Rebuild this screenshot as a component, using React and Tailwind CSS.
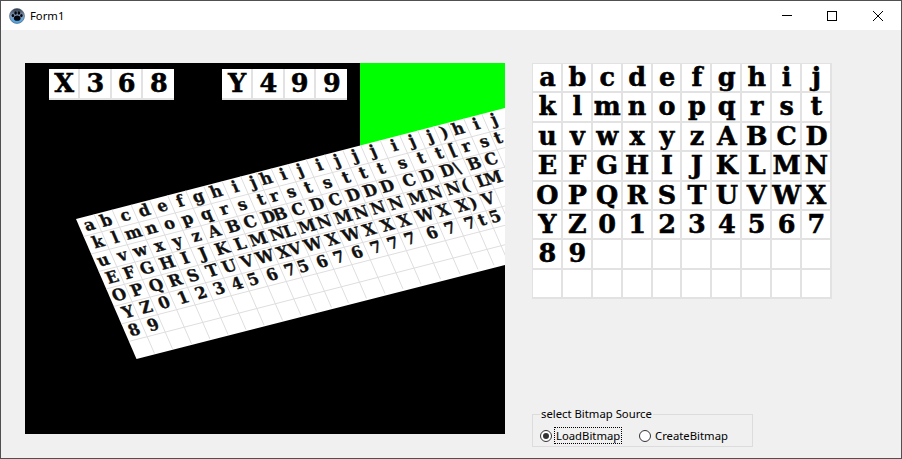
import React from "react";

const ALPHABET = "abcdefghijklmnopqrstuvwxyzABCDEFGHIJKLMNOPQRSTUVWXYZ0123456789".split("");
const CELLS = Array.from({ length: 80 }, (_, i) => ALPHABET[i] ?? "");

const ROWS = [
  "a89 b106 c125 d144 e162 f180 g198 h216 i235 j253 h266 i283 j300 i319 j337 j355 j373 i394 j412 j430 )444 h458 i476 j494",
  "k98 l115 m133 n151 o169 p187 q206 r224 s242 t261 r274 s291 t308 s327 t346 t363 t381 s402 t421 t439 [452 r466 s484 t498",
  "u103 v122 w140 x159 y177 z196 A214 B233 C250 D268 B280 C298 D317 C335 D353 D370 D387 C409 D427 D447 \\457 B474 C491",
  "E112 F129 G147 H167 I185 J203 K222 L240 M258 N277 L289 M307 N324 M343 N361 N378 N396 M417 N435 N453 (465 L482 M493",
  "O119 P137 Q156 R175 S193 T212 U229 V247 W265 X283 V295 W313 X332 W351 X369 X387 X404 W425 X443 X462 )473 V488",
  "Y128 Z146 0164 1183 2201 3219 4237 5253 6272 7290 5303 6322 7339 6357 7376 7393 7410 6432 7450 7470 t482 5495",
  "8134 9153",
].map((row) => row.split(" ").map((t) => [t[0], Number(t.slice(1))]));

const TILE_FONT = "font-['DejaVu_Serif'] font-bold [-webkit-text-stroke:0.5px_black]";

function Tile({ ch }) {
  return (
    <div className={`flex items-center justify-center pl-[1px] bg-white text-black text-[25.5px] leading-none border-r-2 border-b-2 border-[#e2e2e2] ${TILE_FONT}`}>
      {ch}
    </div>
  );
}

function Readout({ text }) {
  return (
    <div className="grid grid-cols-[repeat(4,31.25px)] h-[31px] bg-white">
      {text.split("").map((c, i) => (
        <div
          key={i}
          className={`flex items-center justify-center pl-[1px] text-black text-[25.5px] leading-none border-r-2 border-b-2 border-[#e2e2e2] last:border-r-0 ${TILE_FONT}`}
        >
          {c}
        </div>
      ))}
    </div>
  );
}

function WarpedBitmap() {
  const ox = 25;
  const oy = 63;
  const v = [7.6, 17.5];
  const firstRow = ROWS[0];
  const rowCentre = (r, x) => 224.5 + 17.5 * r - 0.26 * (x - 89 - 7.6 * r);
  const columnLines = firstRow.slice(0, -1).map((l, i) => {
    const mx = (l[1] + firstRow[i + 1][1]) / 2;
    const my = rowCentre(0, mx);
    return [mx - v[0] / 2, my - v[1] / 2, mx + v[0] * 7.5, my + v[1] * 7.5];
  });
  const rowLines = Array.from({ length: 7 }, (_, i) => {
    const x0 = 76 + 7.5 * (i + 1);
    const y0 = 219 + 17.5 * (i + 1);
    return [x0, y0, 520, y0 - 0.257 * (520 - x0)];
  });
  return (
    <svg className="absolute inset-0" width="480" height="371" viewBox={`${ox} ${oy} 480 371`}>
      <defs>
        <clipPath id="quad">
          <polygon points="76,219 505,108 505,265 136.5,359" />
        </clipPath>
      </defs>
      <rect x="360" y="63" width="145" height="90" fill="#00ff00" />
      <polygon points="76,219 505,108 505,265 136.5,359" fill="#ffffff" />
      <g clipPath="url(#quad)" stroke="#dedede" strokeWidth="1">
        {columnLines.map((l, i) => (
          <line key={i} x1={l[0]} y1={l[1]} x2={l[2]} y2={l[3]} />
        ))}
        {rowLines.map((l, i) => (
          <line key={i} x1={l[0]} y1={l[1]} x2={l[2]} y2={l[3]} />
        ))}
        <g fill="#111111" className="font-['DejaVu_Serif'] font-bold" stroke="#111111" strokeWidth="0.5" fontSize="25.5" textAnchor="middle">
          {ROWS.map((row, r) =>
            row.map(([c, x], i) => (
              <text key={`${r}-${i}`} transform={`matrix(0.6,-0.16,0.26,0.6,${x},${rowCentre(r, x)})`} x="0" y="9">
                {c}
              </text>
            ))
          )}
        </g>
      </g>
    </svg>
  );
}

function PawIcon() {
  return (
    <svg width="16" height="16" viewBox="0 0 16 16">
      <defs>
        <linearGradient id="globe" x1="0" y1="0" x2="0" y2="1">
          <stop offset="0" stopColor="#2c3440" />
          <stop offset="0.5" stopColor="#8aa4c4" />
          <stop offset="1" stopColor="#3fa4ee" />
        </linearGradient>
      </defs>
      <circle cx="8" cy="8" r="7.5" fill="url(#globe)" stroke="#4d5a6a" strokeWidth="0.6" />
      <g fill="#05050c">
        <ellipse cx="8.2" cy="10.2" rx="3.3" ry="2.6" />
        <ellipse cx="3.9" cy="7.6" rx="1.3" ry="1.7" />
        <ellipse cx="6.6" cy="5" rx="1.3" ry="1.8" />
        <ellipse cx="9.9" cy="5" rx="1.3" ry="1.8" />
        <ellipse cx="12.4" cy="7.6" rx="1.3" ry="1.7" />
      </g>
    </svg>
  );
}

function Radio({ checked }) {
  return (
    <span className="flex items-center justify-center w-[12px] h-[12px] rounded-full border border-[#333333] bg-white shrink-0">
      {checked && <span className="w-[6px] h-[6px] rounded-full bg-[#333333]" />}
    </span>
  );
}

export default function App() {
  return (
    <div className="w-[902px] h-[459px] flex flex-col bg-[#f0f0f0] border border-[#505050] font-['Noto_Sans',sans-serif] text-[11.3px] text-black overflow-hidden">
      <header className="h-[29px] shrink-0 bg-white flex items-center pl-[8px]">
        <PawIcon />
        <span className="ml-[5px] leading-none">Form1</span>
        <div className="ml-auto flex items-center">
          <svg width="12" height="12" viewBox="0 0 12 12" className="mr-[33px]">
            <line x1="1" y1="5.5" x2="11" y2="5.5" stroke="#000" />
          </svg>
          <svg width="12" height="12" viewBox="0 0 12 12" className="mr-[34px]">
            <rect x="1.5" y="1.5" width="9" height="9" fill="none" stroke="#000" />
          </svg>
          <svg width="12" height="12" viewBox="0 0 12 12" className="mr-[17px]">
            <path d="M1 1 L11 11 M11 1 L1 11" stroke="#000" />
          </svg>
        </div>
      </header>

      <main className="flex-1 flex pl-[24px] pt-[33px] pb-[11px]">
        <section className="relative w-[480px] h-[371px] bg-black overflow-hidden shrink-0">
          <WarpedBitmap />
          <div className="relative flex pt-[6px] pl-[24px] gap-[48px]">
            <Readout text="X368" />
            <Readout text="Y499" />
          </div>
        </section>

        <aside className="ml-[27px] flex flex-col">
          <div className="w-[300px] h-[236px] border-l border-t border-[#e2e2e2] grid grid-cols-[repeat(10,29.9px)] grid-rows-[repeat(8,29.4px)]">
            {CELLS.map((c, i) => (
              <Tile key={i} ch={c} />
            ))}
          </div>
          <fieldset className="mt-auto w-[221px] h-[40px] border border-[#dcdcdc] pl-[7px] pt-[6px] flex items-center">
            <legend className="px-[1px] leading-[14px]">select Bitmap Source</legend>
            <div className="flex items-center w-[99px]">
              <Radio checked />
              <span className="ml-[2px] px-[1px] h-[17px] flex items-center border border-dotted border-black leading-none">LoadBitmap</span>
            </div>
            <div className="flex items-center">
              <Radio />
              <span className="ml-[4px] leading-none">CreateBitmap</span>
            </div>
          </fieldset>
        </aside>
      </main>
    </div>
  );
}
